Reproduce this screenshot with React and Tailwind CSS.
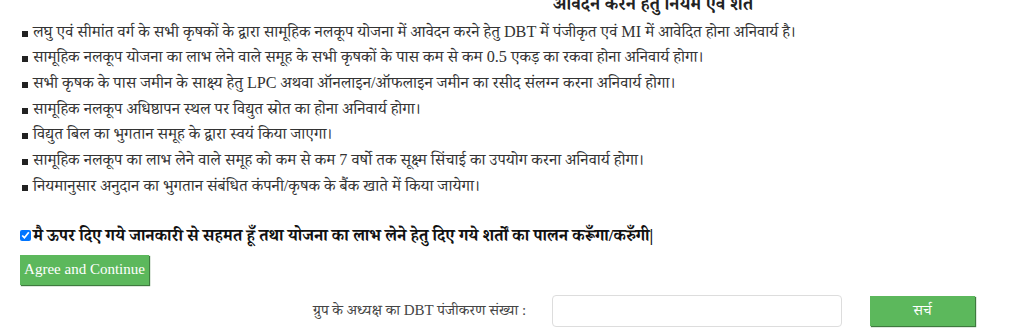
import React from "react";

const items = [
  "लघु एवं सीमांत वर्ग के सभी कृषकों के द्वारा सामूहिक नलकूप योजना में आवेदन करने हेतु DBT में पंजीकृत एवं MI में आवेदित होना अनिवार्य है।",
  "सामूहिक नलकूप योजना का लाभ लेने वाले समूह के सभी कृषकों के पास कम से कम 0.5 एकड़ का रकवा होना अनिवार्य होगा।",
  "सभी कृषक के पास जमीन के साक्ष्य हेतु LPC अथवा ऑनलाइन/ऑफलाइन जमीन का रसीद संलग्न करना अनिवार्य होगा।",
  "सामूहिक नलकूप अधिष्ठापन स्थल पर विद्युत स्रोत का होना अनिवार्य होगा।",
  "विद्युत बिल का भुगतान समूह के द्वारा स्वयं किया जाएगा।",
  "सामूहिक नलकूप का लाभ लेने वाले समूह को कम से कम 7 वर्षो तक सूक्ष्म सिंचाई का उपयोग करना अनिवार्य होगा।",
  "नियमानुसार अनुदान का भुगतान संबंधित कंपनी/कृषक के बैंक खाते में किया जायेगा।",
];

export default function App() {
  return (
    <div
      className="w-[1024px] h-[336px] overflow-hidden bg-white text-[#333]"
      style={{ fontFamily: '"Liberation Serif", "Noto Serif Devanagari", "Noto Sans Devanagari", serif' }}
    >
      <div className="pl-[553px] -mt-[6px] h-[20px] text-[18.3px] font-bold text-[#222] leading-[20px] whitespace-nowrap">
        आवेदन करने हेतु नियम एवं शर्ते
      </div>
      <ul className="pl-[22px] mt-[5px]">
        {items.map((t, i) => (
          <li key={i} className="flex items-center h-[25.67px] text-[16.2px] whitespace-nowrap">
            <span className="w-[6px] h-[6px] bg-[#222] mr-[5px] mt-[4px] shrink-0" />
            <span>{t}</span>
          </li>
        ))}
      </ul>
      <div className="mt-[29px] pl-[20px] flex items-center h-[16px]">
        <input type="checkbox" defaultChecked className="w-[11px] h-[11px] m-0 mr-[2px] accent-[#0075ff]" />
        <span className="text-[16.8px] font-bold text-[#111] whitespace-nowrap">
          मै ऊपर दिए गये जानकारी से सहमत हूँ तथा योजना का लाभ लेने हेतु दिए गये शर्तों का पालन करूँगा/करुँगी|
        </span>
      </div>
      <div className="pl-[20px] mt-[11px]">
        <button className="w-[129px] h-[30px] bg-[#5cb85c] text-white text-[15px] shadow-[1px_1px_1px_#3e7a3e]">
          Agree and Continue
        </button>
      </div>
      <div className="flex items-center mt-[10px] h-[32px]">
        <span className="pl-[313px] text-[15px] text-[#444] w-[552px] whitespace-nowrap">
          ग्रुप के अध्यक्ष का DBT पंजीकरण संख्या :
        </span>
        <input className="w-[290px] h-[32px] border border-[#ddd] rounded-[4px] bg-white" />
        <button className="ml-[28px] w-[105px] h-[30px] bg-[#5cb85c] text-white text-[15px] shadow-[1px_1px_1px_#3e7a3e]">
          सर्च
        </button>
      </div>
    </div>
  );
}
